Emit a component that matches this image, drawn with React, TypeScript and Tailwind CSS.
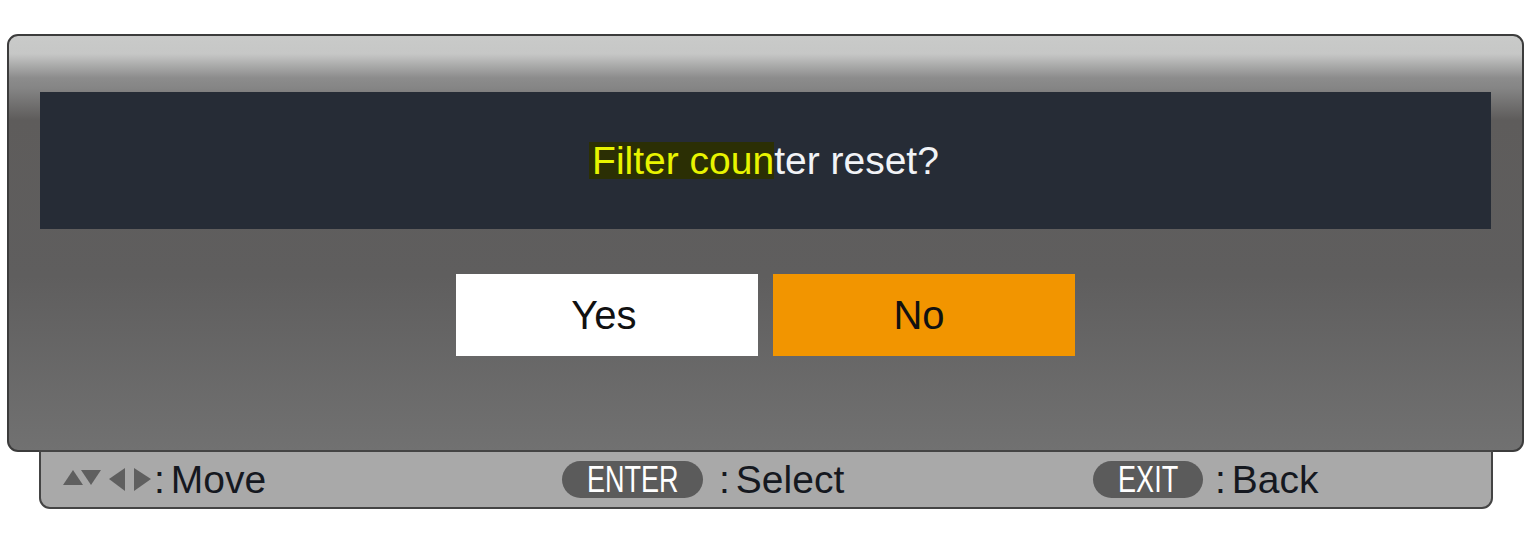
import React from 'react';

const NavArrows: React.FC = () => (
  <svg width="92" height="27" viewBox="0 0 92 27" className="shrink-0">
    <polygon points="2,19 12,4 22,19" fill="#5f5f5f" />
    <polygon points="20,4 40,4 30,19" fill="#5f5f5f" />
    <polygon points="64,2 48,13 64,25" fill="#5f5f5f" />
    <polygon points="73,2 90,13 73,25" fill="#5f5f5f" />
  </svg>
);

const KeyPill: React.FC<{ label: string; width: string }> = ({ label, width }) => (
  <div className={`${width} h-[37px] rounded-full bg-[#5b5b5b] flex items-center justify-center`}>
    <span className="text-white text-[37px] leading-none inline-block scale-x-[0.73]">{label}</span>
  </div>
);

const Action: React.FC<{ label: string }> = ({ label }) => (
  <span className="flex items-center">
    <span>:</span>
    <span className="ml-[6px]">{label}</span>
  </span>
);

export default function App() {
  return (
    <div className="w-[1536px] h-[553px] bg-white font-['Liberation_Sans',Arial,sans-serif] overflow-hidden">
      <div className="pt-[34px] pl-[7px] flex flex-col">
        {/* dialog panel */}
        <div className="w-[1517px] h-[418px] rounded-[11px] border-2 border-[#3c3c3c] bg-[linear-gradient(to_bottom,#c9cac9_0px,#c6c7c6_18px,#8c8c8c_42px,#858585_52px,#5e5c5b_84px,#5f5e5e_240px,#717171_100%)] px-[31px] pt-[56px] flex flex-col items-center">
          <div className="w-[1451px] h-[137px] bg-[#262c36] flex items-center justify-center">
            <p className="text-[39px] leading-[37px] text-[#f1f3f6] -mt-[1px] -ml-[3px]">
              <span className="inline-block h-[37px] pl-[3px] bg-[#2b2f04] text-[#e8f400]">Filter coun</span>ter reset?
            </p>
          </div>
          <div className="mt-[45px] flex gap-[15px]">
            <button className="w-[302px] h-[82px] bg-white text-[#111] text-[40px] flex items-center justify-center pr-[6px]">Yes</button>
            <button className="w-[302px] h-[82px] bg-[#f29500] text-[#111] text-[40px] flex items-center justify-center pr-[10px]">No</button>
          </div>
        </div>

        {/* key guide */}
        <div className="ml-[32px] -mt-[2px] w-[1454px] h-[59px] bg-[#a9a9a9] border-2 border-[#444] rounded-b-[11px] grid grid-cols-[521px_531px_1fr] items-center text-[#15181f] text-[39px] leading-none">
          <div className="pl-[20px] flex items-center gap-[1px]">
            <NavArrows />
            <Action label="Move" />
          </div>
          <div className="flex items-center gap-[16px]">
            <KeyPill label="ENTER" width="w-[141px]" />
            <Action label="Select" />
          </div>
          <div className="flex items-center gap-[12px]">
            <KeyPill label="EXIT" width="w-[110px]" />
            <Action label="Back" />
          </div>
        </div>
      </div>
    </div>
  );
}
